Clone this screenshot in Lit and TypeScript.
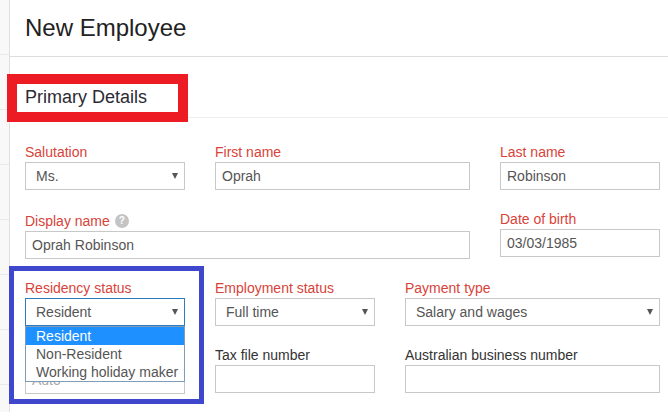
import { LitElement, html, css } from "lit";
import { customElement } from "lit/decorators.js";

@customElement("app-root")
export class AppRoot extends LitElement {
  static styles = css`
    :host { display: block; position: relative; width: 668px; height: 412px; overflow: hidden; background: #fff;
      font-family: "Liberation Sans", Arial, sans-serif; font-size: 14px; color: #333; }
    .layout { display: flex; height: 412px; }
    .side { width: 9px; flex: none; background: #f8f8f8; border-right: 1px solid #e0e0e0; overflow: hidden; }
    .side div { height: 55px; box-sizing: border-box; border-bottom: 1px solid #e9e9e9; }
    .main { flex: 1; min-width: 0; }
    header { box-sizing: border-box; padding: 14px 0 0 15px; border-bottom: 1px solid #ddd; height: 57px; }
    h1 { margin: 0; font-size: 24px; font-weight: 400; line-height: 28px; color: #222; }
    .section { height: 61px; box-sizing: border-box; padding: 30px 0 0 15px; border-bottom: 1px solid #eee; }
    h2 { margin: 0; font-size: 16px; font-weight: 400; line-height: 20px; color: #2b2b33; font-size: 18px; }
    form { display: flex; flex-direction: column; gap: 20px; padding: 25px 0 0 15px; width: 635px; }
    .row { display: grid; grid-template-columns: repeat(7, 65px); column-gap: 30px; align-items: start; }
    .s2 { grid-column: span 2; } .s3 { grid-column: span 3; } .s5 { grid-column: span 5; }
    .field { position: relative; }
    label { display: flex; align-items: center; gap: 5px; height: 18px; line-height: 18px; color: #333; white-space: nowrap; }
    label.req { color: #d8433a; }
    label.help { height: 20px; padding-top: 2px; box-sizing: border-box; }
    .q { width: 14px; height: 14px; border-radius: 50%; background: #c4c4c4; color: #fff; font-size: 10px; font-weight: 700; line-height: 14px; text-align: center; }
    .box { display: flex; align-items: center; height: 28px; box-sizing: border-box; border: 1px solid #c8c8c8; background: #fff; padding: 0 6px; color: #555; line-height: 26px; }
    label + .box { margin-top: 1px; }
    label + .box.low { margin-top: 2px; }
    .sel { padding-left: 10px; justify-content: space-between; padding-right: 6px; }
    .sel::after { content: ""; border: 3.5px solid transparent; border-top: 6px solid #555; border-bottom: 0; }
    .sel.open { border-color: #2f7cb8; }
    .ph { color: #aaa; }
    .menu { position: absolute; left: 0; right: 0; top: 47px; height: 56px; box-sizing: border-box; background: #fff; border: 1px solid #7f9db9; z-index: 2; color: #555; }
    .menu div { height: 18px; line-height: 18px; padding-left: 10px; white-space: nowrap; }
    .menu .on { background: #1e90ff; color: #fff; }
    .mark { position: absolute; box-sizing: border-box; pointer-events: none; z-index: 3; }
    .red { left: 7px; top: 74px; width: 181px; height: 48px; border: 10px solid #ed1c24; }
    .blue { left: 9px; top: 266px; width: 195px; height: 138px; border: 5px solid #3f48cc; }
  `;

  render() {
    return html`
      <div class="layout">
        <div class="side">${[1, 2, 3, 4, 5, 6, 7, 8].map(() => html`<div></div>`)}</div>
        <div class="main">
          <header><h1>New Employee</h1></header>
          <div class="section"><h2>Primary Details</h2></div>
          <form>
            <div class="row">
              <div class="field s2"><label class="req">Salutation</label><div class="box sel">Ms.</div></div>
              <div class="field s3"><label class="req">First name</label><div class="box">Oprah</div></div>
              <div class="field s2"><label class="req">Last name</label><div class="box">Robinson</div></div>
            </div>
            <div class="row">
              <div class="field s5"><label class="req help">Display name <span class="q">?</span></label><div class="box">Oprah Robinson</div></div>
              <div class="field s2"><label class="req">Date of birth</label><div class="box">03/03/1985</div></div>
            </div>
            <div class="row">
              <div class="field s2">
                <label class="req">Residency status</label><div class="box sel open">Resident</div>
                <div class="menu"><div class="on">Resident</div><div>Non-Resident</div><div>Working holiday maker</div></div>
              </div>
              <div class="field s2"><label class="req">Employment status</label><div class="box sel">Full time</div></div>
              <div class="field s3"><label class="req">Payment type</label><div class="box sel">Salary and wages</div></div>
            </div>
            <div class="row">
              <div class="field s2"><label></label><div class="box ph low">Auto</div></div>
              <div class="field s2"><label>Tax file number</label><div class="box"></div></div>
              <div class="field s3"><label>Australian business number</label><div class="box"></div></div>
            </div>
          </form>
        </div>
      </div>
      <div class="mark red"></div>
      <div class="mark blue"></div>
    `;
  }
}
